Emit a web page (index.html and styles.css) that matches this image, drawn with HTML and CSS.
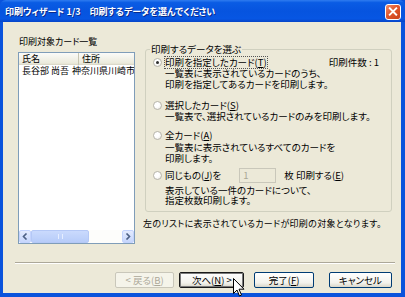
FILE: index.html
```html
<!DOCTYPE html>
<html lang="ja">
<head>
<meta charset="utf-8">
<link rel="stylesheet" href="styles.css">
</head>
<body>
<div class="window">
  <div class="titlebar">
    <span class="title">印刷ウィザード 1/3　印刷するデータを選んでください</span>
    <div class="close"><svg width="15" height="15" viewBox="0 0 15 15"><path d="M4 4 L11 11 M11 4 L4 11" stroke="#fff" stroke-width="2" stroke-linecap="square"/></svg></div>
  </div>
  <div class="body">
    <div class="main">
      <div class="left">
        <div class="label">印刷対象カード一覧</div>
        <div class="listview">
          <div class="lv-head">
            <div class="col c1">氏名</div>
            <div class="col c2">住所</div>
          </div>
          <div class="lv-rows">
            <div class="row"><span class="c1">長谷部 尚吾</span><span class="c2">神奈川県川崎市</span></div>
          </div>
          <div class="hscroll">
            <div class="sbtn"><svg width="6" height="7" viewBox="0 0 6 7"><path d="M4.5 0.5 L1.5 3.5 L4.5 6.5" stroke="#4D6185" stroke-width="1.6" fill="none"/></svg></div>
            <div class="thumb"><span class="grip"></span></div>
            <div class="track"></div>
            <div class="sbtn"><svg width="6" height="7" viewBox="0 0 6 7"><path d="M1.5 0.5 L4.5 3.5 L1.5 6.5" stroke="#4D6185" stroke-width="1.6" fill="none"/></svg></div>
          </div>
        </div>
      </div>
      <div class="right">
        <fieldset class="group">
          <legend>印刷するデータを選ぶ</legend>
          <div class="opt opt1">
            <div class="optrow">
              <span class="radio checked"></span>
              <span class="focus">印刷を指定したカード(<u>T</u>)</span>
              <span class="count">印刷件数 : 1</span>
            </div>
            <div class="desc">一覧表に表示されているカードのうち、<br>印刷を指定してあるカードを印刷します。</div>
          </div>
          <div class="opt opt2">
            <div class="optrow">
              <span class="radio"></span>
              <span>選択したカード(<u>S</u>)</span>
            </div>
            <div class="desc">一覧表で、選択されているカードのみを印刷します。</div>
          </div>
          <div class="opt opt3">
            <div class="optrow">
              <span class="radio"></span>
              <span>全カード(<u>A</u>)</span>
            </div>
            <div class="desc">一覧表に表示されているすべてのカードを<br>印刷します。</div>
          </div>
          <div class="opt opt4">
            <div class="optrow">
              <span class="radio"></span>
              <span>同じもの(<u>J</u>)を</span>
              <span class="input">1</span>
              <span>枚 印刷する(<u>E</u>)</span>
            </div>
            <div class="desc">表示している一件のカードについて、<br>指定枚数印刷します。</div>
          </div>
        </fieldset>
        <div class="note">左のリストに表示されているカードが印刷の対象となります。</div>
      </div>
    </div>
    <div class="sep"></div>
    <div class="buttons">
      <div class="btn disabled">&lt; 戻る(<u>B</u>)</div>
      <div class="btn default">次へ(<u>N</u>) &gt;</div>
      <div class="btn finish">完了(<u>F</u>)</div>
      <div class="btn cancel">キャンセル</div>
    </div>
  </div>
  <svg class="cursor" width="12" height="19" viewBox="0 0 12 19"><path d="M0.5 0.5 L0.5 15.5 L4 12 L6.5 18 L8.5 17 L6 11.2 L11 11.2 Z" fill="#fff" stroke="#000" stroke-width="1" stroke-linejoin="miter"/></svg>
</div>
</body>
</html>
```
FILE: styles.css
```css
* { box-sizing: border-box; }
html, body { margin: 0; padding: 0; }
body {
  width: 405px;
  height: 297px;
  overflow: hidden;
  font-family: "Noto Sans CJK JP", "Noto Sans", sans-serif;
  font-size: 9.5px;
  font-feature-settings: "palt";
  color: #000;
  background: #fff;
}
u { text-decoration: underline; text-underline-offset: 1px; }

.window {
  position: relative;
  width: 405px;
  height: 297px;
  display: flex;
  flex-direction: column;
  background: #0A53DC;
  padding: 0 4px 4px 3px;
}

.titlebar {
  height: 22px;
  margin: 0 -4px 0 -3px;
  padding: 0 4px 0 5px;
  display: flex;
  align-items: center;
  justify-content: space-between;
  background: linear-gradient(to bottom, #2F7CF0 0%, #0A5CE4 12%, #0654DF 50%, #0756E3 85%, #0645C8 100%);
  border-radius: 6px 6px 0 0;
}
.title {
  color: #fff;
  font-weight: bold;
  font-size: 9px;
  text-shadow: 1px 1px 0 #0A2A8A;
}
.close {
  width: 16px;
  height: 16px;
  margin-top: 1px;
  border: 1px solid #fff;
  border-radius: 3px;
  background: linear-gradient(135deg, #F08D6C 0%, #E2572C 45%, #C8421C 100%);
  display: flex;
  align-items: center;
  justify-content: center;
}

.body {
  flex: 1;
  background: #ECE9D8;
  display: flex;
  flex-direction: column;
  padding: 14px 9px 0 15px;
}
.main {
  display: flex;
  gap: 10px;
  height: 208px;
}
.left {
  width: 117px;
  display: flex;
  flex-direction: column;
}
.label {
  height: 12px;
  line-height: 12px;
  margin-left: 1px;
  font-size: 9px;
}
.listview {
  margin-top: 4px;
  height: 192px;
  border: 1px solid #7F9DB9;
  background: #fff;
  display: flex;
  flex-direction: column;
  font-size: 9px;
}
.lv-head {
  display: flex;
  height: 12px;
  background: linear-gradient(to bottom, #FBFBF9, #EBEADB 85%, #D6D3C2);
}
.lv-head .col {
  line-height: 12px;
  padding-left: 3px;
  border-right: 1px solid #C7C5B2;
}
.lv-head .c1 { width: 60px; }
.lv-head .c2 { flex: 1; border-right: none; }
.lv-rows { flex: 1; }
.row { display: flex; height: 12px; line-height: 12px; white-space: nowrap; overflow: hidden; }
.row .c1 { width: 60px; padding-left: 3px; }
.row .c2 { padding-left: 3px; }

.hscroll {
  height: 13px;
  display: flex;
  background: #FEFEFE;
}
.sbtn {
  width: 12px;
  height: 13px;
  border: 1px solid #C3D3FD;
  border-radius: 2px;
  background: linear-gradient(to bottom, #E3EBFE, #C6D6FC);
  display: flex;
  align-items: center;
  justify-content: center;
}
.thumb {
  width: 58px;
  border: 1px solid #B4C8F6;
  border-radius: 2px;
  background: linear-gradient(to bottom, #CADAFD, #B7CCF9);
  display: flex;
  align-items: center;
  justify-content: center;
}
.grip { width: 5px; height: 5px; border: 1px solid #E6EEFF; border-width: 0 1px; }
.track { flex: 1; background: #FDFDFB; }

.right {
  flex: 1;
  display: flex;
  flex-direction: column;
}
.group {
  margin: 7px 0 0 0;
  height: 169px;
  border: 1px solid #D0D0BF;
  border-radius: 3px;
  padding: 2px 0 0 7px;
  min-width: 0;
}
.group legend {
  margin-left: -3px;
  padding: 0 1px;
  height: 12px;
  line-height: 12px;
}
.optrow {
  display: flex;
  align-items: center;
  height: 11px;
  line-height: 11px;
  white-space: nowrap;
}
.radio {
  width: 9px;
  height: 9px;
  border-radius: 50%;
  border: 1px solid #B7B5AB;
  background: radial-gradient(circle at 35% 35%, #FFFFFF 40%, #E6E4DC);
  margin-right: 3px;
  position: relative;
  flex: none;
}
.radio.checked::after {
  content: "";
  position: absolute;
  left: 2px;
  top: 2px;
  width: 3px;
  height: 3px;
  border-radius: 50%;
  background: #2E2E2E;
}
.focus { outline: 1px dotted #555; outline-offset: 0; }
.count { margin-left: auto; margin-right: 12px; }
.desc {
  padding-left: 12px;
  line-height: 11px;
}
.opt2 { margin-top: 10px; }
.opt3 { margin-top: 8px; }
.opt3 .desc { margin-top: 1px; }
.opt4 { margin-top: 4px; }
.opt4 .optrow { height: 15px; }
.opt4 .desc { margin-top: 2px; line-height: 10px; }
.input {
  width: 37px;
  height: 15px;
  margin: 0 8px 0 18px;
  border: 1px solid #C9C7BA;
  background: #ECE9D8;
  color: #A9A795;
  padding-left: 3px;
  line-height: 13px;
}
.note {
  margin-top: 6px;
  margin-left: -2px;
  line-height: 12px;
  white-space: nowrap;
  font-size: 9px;
  letter-spacing: 0.3px;
}

.sep {
  margin: 18px 0 0 -3px;
  width: 380px;
  height: 2px;
  border-top: 1px solid #ACA899;
  border-bottom: 1px solid #FFFFFF;
}
.buttons {
  display: flex;
  margin-top: 8px;
  padding-left: 97px;
}
.btn {
  height: 16px;
  width: 60px;
  border: 1px solid #003C74;
  border-radius: 2px;
  background: linear-gradient(to bottom, #FFFFFF, #F3F2EC 70%, #D9D6C9);
  display: flex;
  align-items: center;
  justify-content: center;
  line-height: 12px;
  white-space: nowrap;
}
.btn.disabled {
  border-color: #C9C7BA;
  background: #F5F4EA;
  color: #ACA899;
}
.btn.default {
  margin-left: 5px;
  width: 66px;
  border-color: #1A1A1A;
  box-shadow: inset 0 0 0 1px #7A7A7A;
}
.btn.finish { margin-left: 10px; }
.btn.cancel { margin-left: 15px; width: 64px; }

.cursor {
  position: absolute;
  left: 233px;
  top: 278px;
}
```
